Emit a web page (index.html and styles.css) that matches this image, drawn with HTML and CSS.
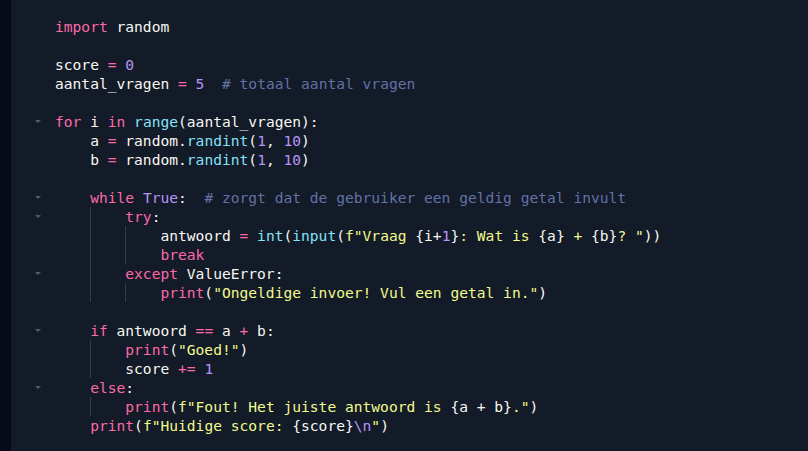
FILE: index.html
```html
<!DOCTYPE html>
<html lang="nl">
<head>
<meta charset="utf-8">
<title>Code</title>
<link rel="stylesheet" href="styles.css">
</head>
<body>
<div class="strip"></div>
<div class="editor">
<div class="ln"><span class="fold"></span><span class="code"><span class="k">import</span> random</span></div>
<div class="ln"><span class="fold"></span><span class="code"></span></div>
<div class="ln"><span class="fold"></span><span class="code">score <span class="k">=</span> <span class="n">0</span></span></div>
<div class="ln"><span class="fold"></span><span class="code">aantal_vragen <span class="k">=</span> <span class="n">5</span>  <span class="c"># totaal aantal vragen</span></span></div>
<div class="ln"><span class="fold"></span><span class="code"></span></div>
<div class="ln"><span class="fold"><i class="arrow"></i></span><span class="code"><span class="k">for</span> i <span class="k">in</span> <span class="f">range</span>(aantal_vragen):</span></div>
<div class="ln"><span class="fold"></span><span class="code"><span class="ind"></span>a <span class="k">=</span> random.<span class="f">randint</span>(<span class="n">1</span>, <span class="n">10</span>)</span></div>
<div class="ln"><span class="fold"></span><span class="code"><span class="ind"></span>b <span class="k">=</span> random.<span class="f">randint</span>(<span class="n">1</span>, <span class="n">10</span>)</span></div>
<div class="ln"><span class="fold"></span><span class="code"></span></div>
<div class="ln"><span class="fold"><i class="arrow"></i></span><span class="code"><span class="ind"></span><span class="k">while</span> <span class="n">True</span>:  <span class="c"># zorgt dat de gebruiker een geldig getal invult</span></span></div>
<div class="ln"><span class="fold"><i class="arrow"></i></span><span class="code"><span class="ind"></span><span class="ind g"></span><span class="k">try</span>:</span></div>
<div class="ln"><span class="fold"></span><span class="code"><span class="ind"></span><span class="ind g"></span><span class="ind g"></span>antwoord <span class="k">=</span> <span class="f">int</span>(<span class="f">input</span>(<span class="s">f"Vraag </span>{i+<span class="n">1</span>}<span class="s">: Wat is </span>{a}<span class="s"> + </span>{b}<span class="s">? "</span>))</span></div>
<div class="ln"><span class="fold"></span><span class="code"><span class="ind"></span><span class="ind g"></span><span class="ind g"></span><span class="k">break</span></span></div>
<div class="ln"><span class="fold"><i class="arrow"></i></span><span class="code"><span class="ind"></span><span class="ind g"></span><span class="k">except</span> ValueError:</span></div>
<div class="ln"><span class="fold"></span><span class="code"><span class="ind"></span><span class="ind g"></span><span class="ind g"></span><span class="k">print</span>(<span class="s">"Ongeldige invoer! Vul een getal in."</span>)</span></div>
<div class="ln"><span class="fold"></span><span class="code"></span></div>
<div class="ln"><span class="fold"><i class="arrow"></i></span><span class="code"><span class="ind"></span><span class="k">if</span> antwoord <span class="k">==</span> a <span class="k">+</span> b:</span></div>
<div class="ln"><span class="fold"></span><span class="code"><span class="ind"></span><span class="ind g"></span><span class="k">print</span>(<span class="s">"Goed!"</span>)</span></div>
<div class="ln"><span class="fold"></span><span class="code"><span class="ind"></span><span class="ind g"></span>score <span class="k">+=</span> <span class="n">1</span></span></div>
<div class="ln"><span class="fold"><i class="arrow"></i></span><span class="code"><span class="ind"></span><span class="k">else</span>:</span></div>
<div class="ln"><span class="fold"></span><span class="code"><span class="ind"></span><span class="ind g"></span><span class="k">print</span>(<span class="s">f"Fout! Het juiste antwoord is </span>{a + b}<span class="s">."</span>)</span></div>
<div class="ln"><span class="fold"></span><span class="code"><span class="ind"></span><span class="k">print</span>(<span class="s">f"Huidige score: </span>{score}<span class="n">\n</span><span class="s">"</span>)</span></div>
</div>
</body>
</html>
```
FILE: styles.css
```css
html, body {
  margin: 0;
  padding: 0;
  height: 100%;
}
body {
  display: flex;
  background: #131a28;
  overflow: hidden;
}
.strip {
  width: 11px;
  flex: none;
  background: #070b17;
}
.editor {
  flex: 1;
  padding-top: 17px;
  font-family: "DejaVu Sans Mono", monospace;
  font-size: 14.6px;
  color: #f8f8f2;
}
.ln {
  display: flex;
  height: 19px;
  line-height: 19px;
}
.fold {
  width: 44px;
  flex: none;
  display: flex;
  align-items: center;
}
.arrow {
  display: block;
  margin-left: 24px;
  margin-top: -1px;
  width: 0;
  height: 0;
  border-left: 3px solid transparent;
  border-right: 3px solid transparent;
  border-top: 3px solid #535966;
}
.code {
  white-space: pre;
}
.ind {
  display: inline-block;
  width: 4ch;
  height: 19px;
  vertical-align: top;
}
.ind.g {
  background: linear-gradient(#363b47, #363b47) no-repeat 0 0 / 1px 100%;
}
.k { color: #fb6aa6; }
.f { color: #84e3f8; }
.n { color: #b794f6; }
.s { color: #f1fa8c; }
.c { color: #6272a4; }
```
